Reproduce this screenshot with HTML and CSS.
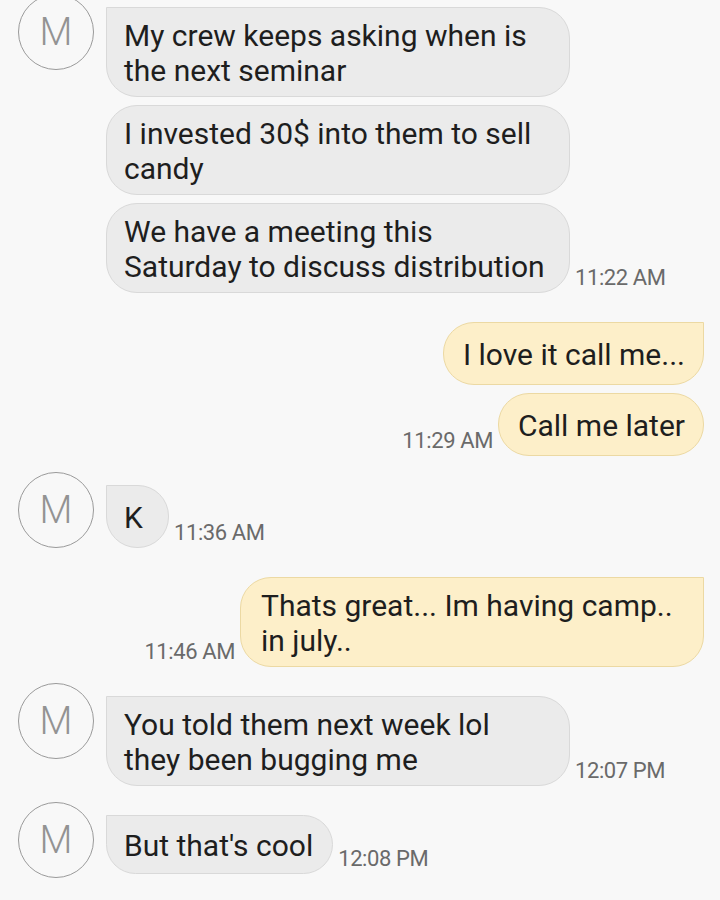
FILE: index.html
```html
<!DOCTYPE html>
<html lang="en">
<head>
    <meta charset="UTF-8">
    <meta name="viewport" content="width=device-width, initial-scale=1.0">
    <title>Messages</title>
    <link rel="stylesheet" href="styles.css">
</head>
<body>
    <main class="thread">
        <!-- Incoming: M -->
        <section class="group incoming">
            <div class="avatar">M</div>
            <div class="stack">
                <div class="line">
                    <p class="bubble first wide">My crew keeps asking when is<br>the next seminar</p>
                </div>
                <div class="line">
                    <p class="bubble wide">I invested 30$ into them to sell<br>candy</p>
                </div>
                <div class="line">
                    <p class="bubble wide">We have a meeting this<br>Saturday to discuss distribution</p>
                    <span class="time">11:22 AM</span>
                </div>
            </div>
        </section>

        <!-- Outgoing -->
        <section class="group outgoing">
            <div class="stack">
                <div class="line">
                    <p class="bubble first">I love it call me...</p>
                </div>
                <div class="line">
                    <span class="time">11:29 AM</span>
                    <p class="bubble">Call me later</p>
                </div>
            </div>
        </section>

        <section class="group incoming">
            <div class="avatar">M</div>
            <div class="stack">
                <div class="line">
                    <p class="bubble first single">K</p>
                    <span class="time">11:36 AM</span>
                </div>
            </div>
        </section>

        <section class="group outgoing">
            <div class="stack">
                <div class="line">
                    <span class="time">11:46 AM</span>
                    <p class="bubble first wide">Thats great... Im having camp..<br>in july..</p>
                </div>
            </div>
        </section>

        <section class="group incoming">
            <div class="avatar">M</div>
            <div class="stack">
                <div class="line">
                    <p class="bubble first wide">You told them next week lol<br>they been bugging me</p>
                    <span class="time">12:07 PM</span>
                </div>
            </div>
        </section>

        <section class="group incoming">
            <div class="avatar">M</div>
            <div class="stack">
                <div class="line">
                    <p class="bubble first short">But that's cool</p>
                    <span class="time">12:08 PM</span>
                </div>
            </div>
        </section>
    </main>
</body>
</html>
```

FILE: styles.css
```css
body {
    margin: 0;
    padding: 0;
    background-color: #f8f8f8;
    font-family: Roboto, "Liberation Sans", sans-serif;
    color: #1e1e1e;
}

.thread {
    display: flex;
    flex-direction: column;
    gap: 29px;
    padding: 7px 16px 0 18px;
}

.group {
    display: flex;
    align-items: flex-start;
}

.outgoing {
    justify-content: flex-end;
}

.avatar {
    flex: none;
    box-sizing: border-box;
    width: 76px;
    height: 76px;
    margin-top: -13px;
    margin-right: 12px;
    border: 1.5px solid #9a9a9a;
    border-radius: 50%;
    display: flex;
    align-items: center;
    justify-content: center;
    font-size: 38px;
    font-weight: 300;
    color: #939393;
}

.stack {
    display: flex;
    flex-direction: column;
    gap: 8px;
}

.line {
    display: flex;
    align-items: flex-end;
    gap: 5px;
}

.outgoing .line {
    justify-content: flex-end;
}

.bubble {
    flex: none;
    box-sizing: border-box;
    max-width: 464px;
    min-height: 63px;
    margin: 0;
    padding: 10px 19px 8px 17px;
    display: flex;
    align-items: center;
    font-size: 30px;
    line-height: 35px;
    border-radius: 31px;
    background-color: #ebebeb;
    border: 1px solid #d9d9d9;
}

.bubble.wide {
    width: 464px;
}

.bubble.short {
    min-height: 59px;
}

.outgoing .bubble {
    padding: 10px 18px 8px 19px;
    background-color: #fdefc9;
    border-color: #ecd9a3;
}

.outgoing .bubble.wide {
    padding-left: 20px;
}

.incoming .bubble.first {
    border-top-left-radius: 0;
}

.outgoing .bubble.first {
    border-top-right-radius: 0;
}

.single {
    min-width: 63px;
}

.time {
    flex: none;
    margin-bottom: 2px;
    font-size: 22px;
    line-height: 26px;
    letter-spacing: -0.4px;
    color: #6a6a6a;
}
```
